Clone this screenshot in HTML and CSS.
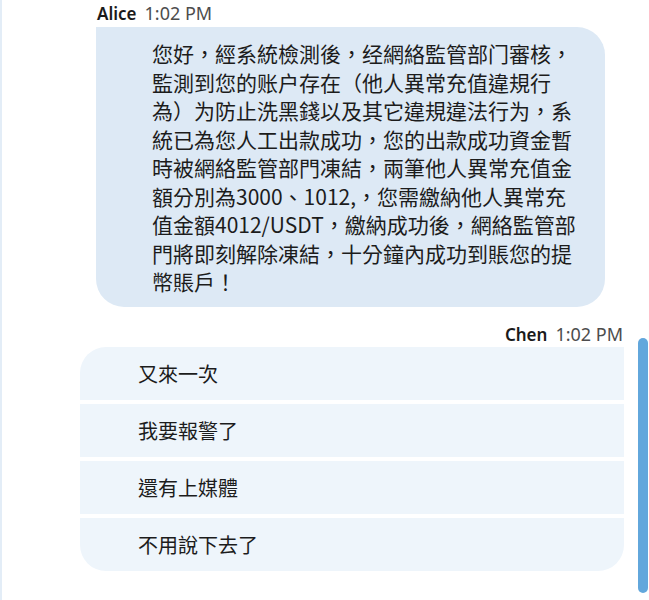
FILE: index.html
```html
<!DOCTYPE html>
<html lang="zh-Hant">
<head>
<meta charset="utf-8">
<title>Chat</title>
<link rel="stylesheet" href="styles.css">
</head>
<body>
<div class="chat">
  <div class="msg incoming">
    <div class="meta"><span class="name">Alice</span><span class="time">1:02 PM</span></div>
    <div class="bubble bubble-in">
      <p class="text">您好，經系統檢測後，经網絡監管部门審核，監測到您的账户存在（他人異常充值違規行為）为防止洗黑錢以及其它違規違法行为，系統已為您人工出款成功，您的出款成功資金暫時被網絡監管部門凍結，兩筆他人異常充值金額分別為3000、1012,，您需繳納他人異常充值金額4012/USDT，繳納成功後，網絡監管部門將即刻解除凍結，十分鐘內成功到賬您的提幣賬戶！</p>
    </div>
  </div>
  <div class="msg outgoing">
    <div class="meta meta-out"><span class="name">Chen</span><span class="time">1:02 PM</span></div>
    <div class="bubble bubble-out">
      <div class="row">又來一次</div>
      <div class="row">我要報警了</div>
      <div class="row">還有上媒體</div>
      <div class="row">不用說下去了</div>
    </div>
  </div>
  <div class="scrollbar"></div>
</div>
</body>
</html>
```
FILE: styles.css
```css
html, body {
  margin: 0;
  padding: 0;
  background: #ffffff;
}
body {
  width: 649px;
  height: 600px;
  overflow: hidden;
  font-family: "Noto Sans", "Noto Sans CJK TC", sans-serif;
  color: #1f1f1f;
}
.chat {
  position: relative;
  height: 600px;
  box-sizing: border-box;
  border-left: 2px solid #e3edf7;
}
.msg {
  display: flex;
  flex-direction: column;
}
.incoming {
  margin-left: 94px;
  width: 509px;
}
.outgoing {
  margin-left: 78px;
  width: 544px;
}
.meta {
  display: flex;
  align-items: baseline;
  gap: 8px;
  height: 27px;
  line-height: 26px;
  padding-left: 1px;
}
.meta-out {
  justify-content: flex-end;
  height: 40px;
  line-height: 26px;
  padding-top: 14px;
  box-sizing: border-box;
  padding-right: 1px;
}
.name {
  font-weight: 600;
  font-size: 17px;
  color: #1a1a1a;
}
.meta-out .name {
  margin-right: 0;
}
.time {
  font-size: 18px;
  color: #4d4d4d;
}
.bubble {
  font-family: "Noto Sans CJK TC", sans-serif;
  color: #1c1c1c;
}
.bubble-in {
  background: #dde9f5;
  border-radius: 0 28px 28px 28px;
  padding: 12px 0 11px 56px;
}
.text {
  margin: 0;
  width: 427px;
  font-size: 21px;
  line-height: 28.5px;
}
.bubble-out {
  display: flex;
  flex-direction: column;
  gap: 4px;
  border-radius: 26px 0 26px 26px;
  overflow: hidden;
}
.row {
  height: 53px;
  background: #eef5fb;
  display: flex;
  align-items: center;
  padding-left: 58px;
  font-size: 20px;
}
.scrollbar {
  position: absolute;
  right: 1px;
  top: 338px;
  width: 10px;
  height: 255px;
  border-radius: 5px;
  background: #62a7dc;
}
```
